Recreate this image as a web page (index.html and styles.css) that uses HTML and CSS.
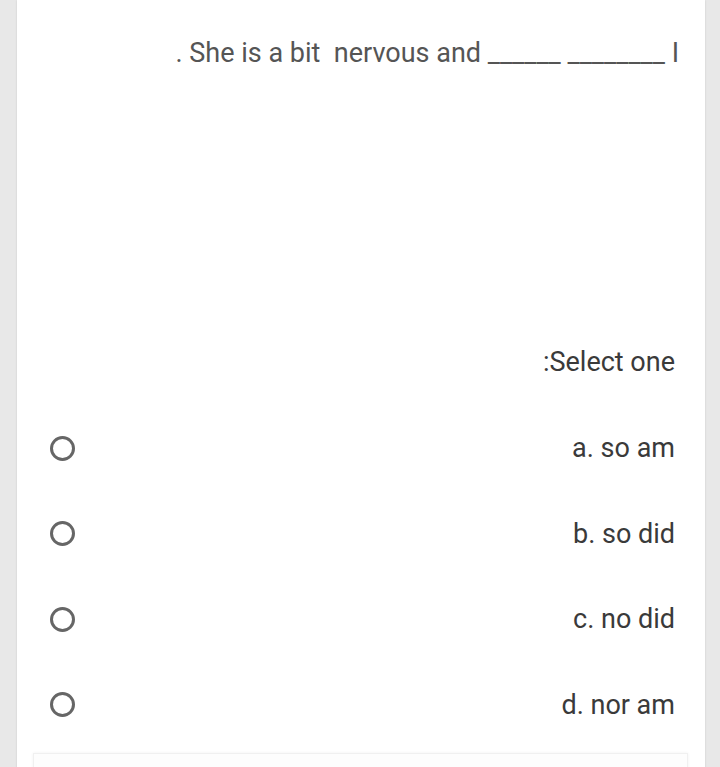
FILE: index.html
```html
<!DOCTYPE html>
<html>
<head>
<meta charset="utf-8">
<link rel="stylesheet" href="styles.css">
</head>
<body>
<div class="page">
  <div class="card">
    <div class="question">. She is a bit&nbsp; nervous and ______ ________ I</div>
    <div class="prompt">:Select one</div>
    <div class="options">
      <div class="option"><span class="radio"></span><span class="label">a. so am</span></div>
      <div class="option"><span class="radio"></span><span class="label">b. so did</span></div>
      <div class="option"><span class="radio"></span><span class="label">c. no did</span></div>
      <div class="option"><span class="radio"></span><span class="label">d. nor am</span></div>
    </div>
    <div class="next-box"></div>
  </div>
</div>
</body>
</html>
```

FILE: styles.css
```css
html, body {
  margin: 0;
  padding: 0;
  background: #e8e8e8;
  font-family: Roboto, "Liberation Sans", sans-serif;
}
.page {
  width: 720px;
  height: 767px;
  overflow: hidden;
  padding: 0 15px 0 17px;
  box-sizing: border-box;
}
.card {
  background: #ffffff;
  height: 800px;
  box-shadow: 0 0 2px rgba(0,0,0,0.12);
  padding: 35px 0 0 0;
  box-sizing: border-box;
}
.question {
  font-size: 27px;
  color: #555555;
  text-align: right;
  padding-right: 26px;
  line-height: 36px;
}
.prompt {
  font-size: 27px;
  color: #3a3a3a;
  text-align: right;
  padding-right: 30px;
  margin-top: 273px;
  line-height: 36px;
}
.options {
  margin-top: 50px;
  display: flex;
  flex-direction: column;
  gap: 49.5px;
}
.option {
  display: flex;
  justify-content: space-between;
  align-items: center;
  height: 36px;
  padding: 0 30px 0 33px;
}
.radio {
  width: 19px;
  height: 19px;
  border: 3px solid #666666;
  border-radius: 50%;
  display: block;
}
.label {
  font-size: 27px;
  color: #3a3a3a;
  line-height: 36px;
}
.next-box {
  margin: 30px 17px 0 16px;
  height: 60px;
  background: #fdfdfd;
  border: 1px solid #f0f0f0;
  box-shadow: 0 0 3px rgba(0,0,0,0.06);
}
```
